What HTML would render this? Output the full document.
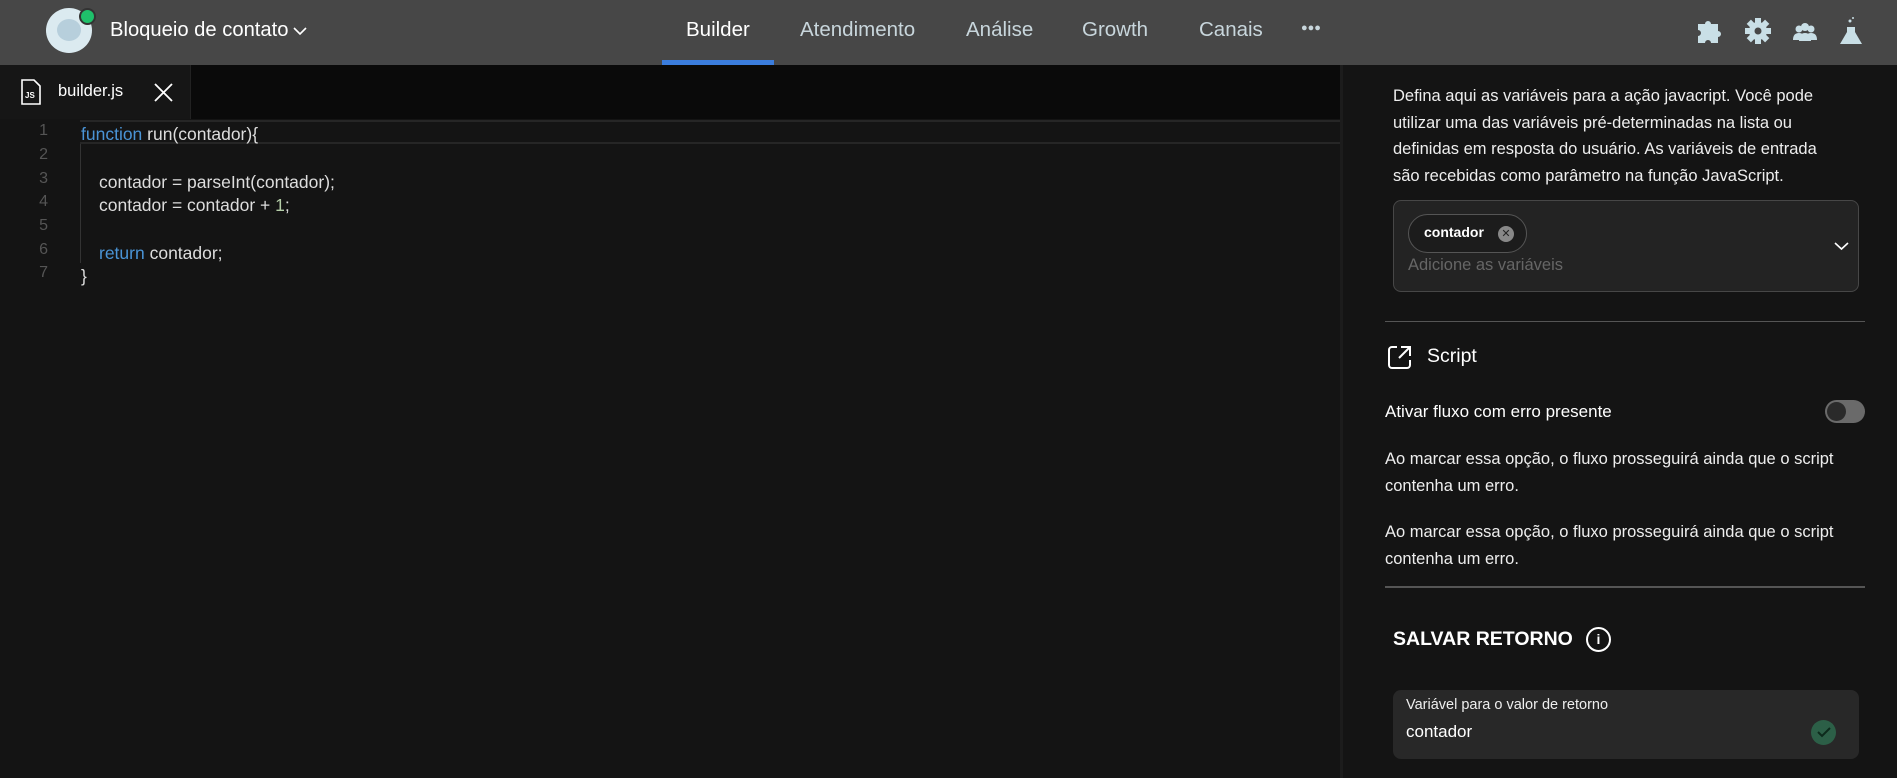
<!DOCTYPE html>
<html><head><meta charset="utf-8"><style>
*{margin:0;padding:0;box-sizing:border-box}
body{width:1897px;height:778px;overflow:hidden;background:#141414;font-family:"Liberation Sans",sans-serif;color:#fff;position:relative}
.a{position:absolute;white-space:nowrap}
.hdr{position:absolute;left:0;top:0;width:1897px;height:65px;background:#474747}
.nav{font-size:20.5px;color:#c8d6dc;top:18px}
.code{font-size:17.5px;color:#ddd}
.ln{font-size:16px;color:#555;width:20px;text-align:right;left:28px}
.kw{color:#4a94d6}
.p{font-size:16.5px;color:#eee;line-height:26.5px;white-space:normal}
</style></head><body>
<div class="hdr"></div>
<div class="a" style="left:46px;top:8px;width:46px;height:45px;border-radius:50%;background:#dbeaf0"></div>
<div class="a" style="left:57px;top:19px;width:24px;height:22px;border-radius:50%;background:#b7cfdc"></div>
<div class="a" style="left:79px;top:8px;width:17px;height:17px;border-radius:50%;background:#1fc06b;border:2px solid #333"></div>
<div class="a" style="left:110px;top:19px;font-size:20.2px;color:#fff">Bloqueio de contato</div>
<svg class="a" style="left:293px;top:26px" width="14" height="10"><path d="M1 2l6 6 6-6" stroke="#fff" stroke-width="1.6" fill="none"/></svg>
<div class="a nav" style="left:686px;color:#fff">Builder</div>
<div class="a" style="left:662px;top:60px;width:112px;height:5px;background:#3b7ddd"></div>
<div class="a nav" style="left:800px">Atendimento</div>
<div class="a nav" style="left:966px">Análise</div>
<div class="a nav" style="left:1082px">Growth</div>
<div class="a nav" style="left:1199px">Canais</div>
<div class="a" style="left:1301px;top:22px;font-size:11px;color:#c8d6dc">●●●</div>
<svg class="a" style="left:1696px;top:16px" width="170" height="32" fill="#c9dfe6">
<path d="M2 8h7a3 3 0 1 1 6 0h7v7a3 3 0 1 1 0 6v6h-7a3 3 0 1 0-6 0H2v-7a3 3 0 1 0 0-6z"/>
<g transform="translate(62,15)"><circle r="9"/><g><rect x="-3" y="-13" width="6" height="26"/><rect x="-13" y="-3" width="26" height="6"/><rect x="-3" y="-13" width="6" height="26" transform="rotate(45)"/><rect x="-3" y="-13" width="6" height="26" transform="rotate(-45)"/></g><circle r="3.5" fill="#474747"/></g>
<g transform="translate(109,16)"><circle cx="-6" cy="-3" r="3.5"/><circle cx="6" cy="-3" r="3.5"/><circle cx="0" cy="-5" r="4"/><path d="M-12 8q0-7 6-7t6 7zM0 8q0-7 6-7t6 7zM-6 9q0-8 6-8t6 8z"/></g>
<g transform="translate(155,2)"><path d="M-4 9h8v5l7 12h-22l7-12z"/><circle cx="-1" cy="3" r="1.5"/><circle cx="2" cy="0" r="1"/></g>
</svg>
<div class="a" style="left:0;top:65px;width:1341px;height:54px;background:#0a0a0a"></div>
<div class="a" style="left:0;top:65px;width:191px;height:54px;background:#161616;border-right:1px solid #222"></div>
<svg class="a" style="left:21px;top:79px" width="20" height="26"><path d="M1 1h12l6 6v18H1z" stroke="#fff" stroke-width="1.6" fill="none"/><text x="4" y="19" font-size="8" fill="#fff" font-family="Liberation Sans" font-weight="bold">JS</text></svg>
<div class="a" style="left:58px;top:82px;font-size:16.5px">builder.js</div>
<svg class="a" style="left:154px;top:83px" width="19" height="19"><path d="M1 1l17 17M18 1L1 18" stroke="#fff" stroke-width="1.8"/></svg>
<div class="a" style="left:80px;top:120px;width:1261px;height:24px;border-top:2px solid #262626;border-bottom:2px solid #262626"></div>
<div class="a" style="left:80px;top:144px;width:1px;height:119px;background:#333"></div>
<div class="a ln" style="top:122px">1</div><div class="a ln" style="top:146px">2</div><div class="a ln" style="top:170px">3</div><div class="a ln" style="top:193px">4</div><div class="a ln" style="top:217px">5</div><div class="a ln" style="top:241px">6</div><div class="a ln" style="top:264px">7</div>
<div class="a code" style="left:81px;top:124px"><span class="kw">function</span> run(contador){</div>
<div class="a code" style="left:99px;top:172px">contador = parseInt(contador);</div>
<div class="a code" style="left:99px;top:195px">contador = contador + <span style="color:#b5cea8">1</span>;</div>
<div class="a code" style="left:99px;top:243px"><span class="kw">return</span> contador;</div>
<div class="a code" style="left:81px;top:266px">}</div>
<div class="a" style="left:1340px;top:65px;width:3px;height:713px;background:#1c1c1c"></div>
<div class="a p" style="left:1393px;top:83px;width:448px">Defina aqui as variáveis para a ação javacript. Você pode utilizar uma das variáveis pré-determinadas na lista ou definidas em resposta do usuário. As variáveis de entrada são recebidas como parâmetro na função JavaScript.</div>
<div class="a" style="left:1393px;top:200px;width:466px;height:92px;border:1px solid #474747;border-radius:8px;background:#232323"></div>
<div class="a" style="left:1408px;top:214px;width:119px;height:39px;border:1px solid #555;border-radius:20px;background:#1c1c1c"></div>
<div class="a" style="left:1424px;top:224px;font-size:14px;font-weight:bold">contador</div>
<div class="a" style="left:1498px;top:226px;width:16px;height:16px;border-radius:50%;background:#888;color:#222;font-size:11px;text-align:center;line-height:16px">✕</div>
<div class="a" style="left:1408px;top:256px;font-size:16.5px;color:#666">Adicione as variáveis</div>
<svg class="a" style="left:1834px;top:241px" width="15" height="10"><path d="M1 2l6.5 6 6.5-6" stroke="#fff" stroke-width="1.6" fill="none"/></svg>
<div class="a" style="left:1385px;top:321px;width:480px;height:1px;background:#555"></div>
<svg class="a" style="left:1387px;top:344px" width="26" height="26"><path d="M10 3H5a3 3 0 0 0-3 3v15a3 3 0 0 0 3 3h15a3 3 0 0 0 3-3v-5M14 3h9v9M23 3L12 14" stroke="#fff" stroke-width="2" fill="none"/></svg>
<div class="a" style="left:1427px;top:345px;font-size:19.5px">Script</div>
<div class="a" style="left:1385px;top:402px;font-size:17px">Ativar fluxo com erro presente</div>
<div class="a" style="left:1825px;top:400px;width:40px;height:23px;border-radius:12px;background:#6a6a6a"></div>
<div class="a" style="left:1827px;top:402px;width:19px;height:19px;border-radius:50%;background:#2a2a2a"></div>
<div class="a p" style="left:1385px;top:446px;width:485px">Ao marcar essa opção, o fluxo prosseguirá ainda que o script contenha um erro.</div>
<div class="a p" style="left:1385px;top:519px;width:485px">Ao marcar essa opção, o fluxo prosseguirá ainda que o script contenha um erro.</div>
<div class="a" style="left:1385px;top:586px;width:480px;height:2px;background:#555"></div>
<div class="a" style="left:1393px;top:628px;font-size:19.5px;font-weight:bold">SALVAR RETORNO</div>
<div class="a" style="left:1586px;top:627px;width:25px;height:25px;border:2px solid #fff;border-radius:50%;text-align:center;font-size:14px;font-weight:bold;line-height:21px">i</div>
<div class="a" style="left:1393px;top:690px;width:466px;height:69px;border-radius:8px;background:#282828"></div>
<div class="a" style="left:1406px;top:697px;font-size:14.5px;color:#eee">Variável para o valor de retorno</div>
<div class="a" style="left:1406px;top:722px;font-size:17px">contador</div>
<div class="a" style="left:1811px;top:720px;width:25px;height:25px;border-radius:50%;background:#2c5f47"></div>
<svg class="a" style="left:1817px;top:726px" width="14" height="12"><path d="M1 6l4 4 8-8" stroke="#0d2a1c" stroke-width="2" fill="none"/></svg>
</body></html>
